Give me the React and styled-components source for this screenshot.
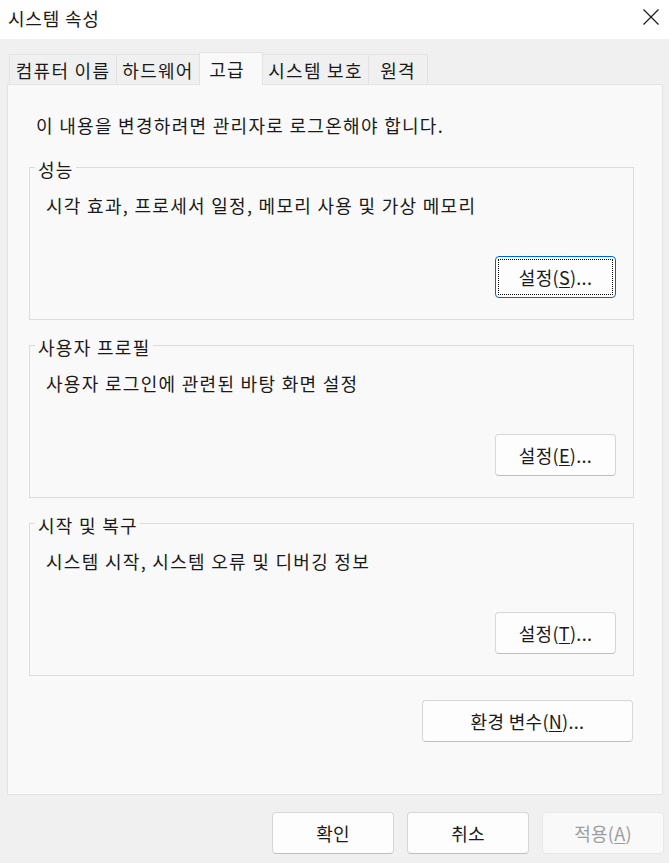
import React from "react";
import styled, { createGlobalStyle, css } from "styled-components";

const GlobalStyle = createGlobalStyle`
  html, body { margin: 0; padding: 0; }
  body {
    font-family: "Noto Sans CJK KR", "Noto Sans", sans-serif;
    background: #f0f0f0;
    color: #1a1a1a;
    letter-spacing: 1.3px;
  }
  * { box-sizing: border-box; }
`;

const Window = styled.div`
  width: 669px;
  height: 863px;
  display: flex;
  flex-direction: column;
  background: #f0f0f0;
  overflow: hidden;
`;

const TitleBar = styled.div`
  height: 39px;
  flex: none;
  background: #ffffff;
  display: flex;
  align-items: flex-start;
  justify-content: space-between;
  padding-left: 8px;
`;

const Title = styled.div`
  font-size: 18px;
  line-height: 24px;
  padding-top: 6px;
  letter-spacing: 0.8px;
  color: #1a1a1a;
`;

const CloseIcon = styled.svg`
  width: 16px;
  height: 16px;
  margin-top: 9px;
  margin-right: 10px;
  flex: none;
`;

const Body = styled.div`
  flex: 1;
  display: flex;
  flex-direction: column;
  padding: 13px 5px 0 7px;
`;

const TabStrip = styled.div`
  display: flex;
  align-items: flex-end;
  padding-left: 2px;
  margin-bottom: -1px;
  position: relative;
  z-index: 1;
  height: 33px;
`;

const Tab = styled.div`
  width: ${(p) => p.$width}px;
  height: ${(p) => (p.$active ? 33 : 31)}px;
  display: flex;
  align-items: center;
  justify-content: center;
  font-size: 18px;
  line-height: 24px;
  white-space: nowrap;
  border: 1px solid #e3e3e3;
  background: #f0f0f0;
  & + & { margin-left: -1px; }
  ${(p) =>
    p.$active &&
    css`
      background: #f9f9f9;
      border-bottom: none;
      padding-right: 8px;
      position: relative;
      z-index: 1;
    `}
`;

const Panel = styled.div`
  height: 711px;
  margin-right: 1px;
  background: #f9f9f9;
  border: 1px solid #e3e3e3;
  padding: 28px 28px 0 21px;
  display: flex;
  flex-direction: column;
`;

const Notice = styled.div`
  font-size: 18px;
  line-height: 24px;
  padding-left: 7px;
  margin-bottom: 18px;
`;

const Group = styled.fieldset`
  margin: 0 0 13px 0;
  padding: 0;
  border: 1px solid #dcdcdc;
  min-inline-size: 0;
`;

const Legend = styled.legend`
  margin-left: 5px;
  padding: 4px 2px 0 3px;
  font-size: 18px;
  line-height: 21px;
`;

const GroupBody = styled.div`
  padding: 13px 17px 21px 16px;
  display: flex;
  flex-direction: column;
`;

const Desc = styled.div`
  font-size: 18px;
  line-height: 24px;
`;

const ButtonRow = styled.div`
  display: flex;
  justify-content: flex-end;
  gap: 13px;
  margin-top: ${(p) => p.$top || 0}px;
  margin-right: ${(p) => p.$right || 0}px;
`;

const Button = styled.button`
  width: ${(p) => p.$width}px;
  height: 42px;
  padding: 0;
  font-family: inherit;
  font-size: 18px;
  line-height: 24px;
  letter-spacing: 0.3px;
  color: #1a1a1a;
  background: #fdfdfd;
  border: 1px solid #d6d6d6;
  border-bottom-color: #bfbfbf;
  border-radius: 4px;
  display: flex;
  align-items: center;
  justify-content: center;
  u { text-underline-offset: 2px; }
  ${(p) =>
    p.$focused &&
    css`
      border: 1px solid #0067c0;
      outline: 1px dotted #000;
      outline-offset: -4px;
    `}
  &:disabled {
    background: #f9f9f9;
    border-color: #e8e8e8;
    color: #9d9d9d;
  }
`;

const Footer = styled.div`
  display: flex;
  justify-content: flex-end;
  gap: 13px;
  margin-top: 17px;
`;

const tabs = [
  { label: "컴퓨터 이름", width: 108 },
  { label: "하드웨어", width: 84 },
  { label: "고급", width: 64, active: true },
  { label: "시스템 보호", width: 107 },
  { label: "원격", width: 60 },
];

const groups = [
  {
    title: "성능",
    desc: "시각 효과, 프로세서 일정, 메모리 사용 및 가상 메모리",
    key: "S",
    focused: true,
  },
  { title: "사용자 프로필", desc: "사용자 로그인에 관련된 바탕 화면 설정", key: "E" },
  { title: "시작 및 복구", desc: "시스템 시작, 시스템 오류 및 디버깅 정보", key: "T" },
];

export default function App() {
  return (
    <>
      <GlobalStyle />
      <Window>
        <TitleBar>
          <Title>시스템 속성</Title>
          <CloseIcon viewBox="0 0 16 16">
            <path d="M0.5 0.5 L15.5 15.5 M15.5 0.5 L0.5 15.5" stroke="#1a1a1a" strokeWidth="1.2" fill="none" />
          </CloseIcon>
        </TitleBar>
        <Body>
          <TabStrip>
            {tabs.map((t) => (
              <Tab key={t.label} $width={t.width} $active={t.active}>
                {t.label}
              </Tab>
            ))}
          </TabStrip>
          <Panel>
            <Notice>이 내용을 변경하려면 관리자로 로그온해야 합니다.</Notice>
            {groups.map((g) => (
              <Group key={g.title}>
                <Legend>{g.title}</Legend>
                <GroupBody>
                  <Desc>{g.desc}</Desc>
                  <ButtonRow $top={39}>
                    <Button $width={121} $focused={g.focused}>
                      설정(<u>{g.key}</u>)...
                    </Button>
                  </ButtonRow>
                </GroupBody>
              </Group>
            ))}
            <ButtonRow $top={11} $right={1}>
              <Button $width={211}>
                환경 변수(<u>N</u>)...
              </Button>
            </ButtonRow>
          </Panel>
          <Footer>
            <Button $width={122}>확인</Button>
            <Button $width={122}>취소</Button>
            <Button $width={122} disabled>
              적용(<u>A</u>)
            </Button>
          </Footer>
        </Body>
      </Window>
    </>
  );
}
